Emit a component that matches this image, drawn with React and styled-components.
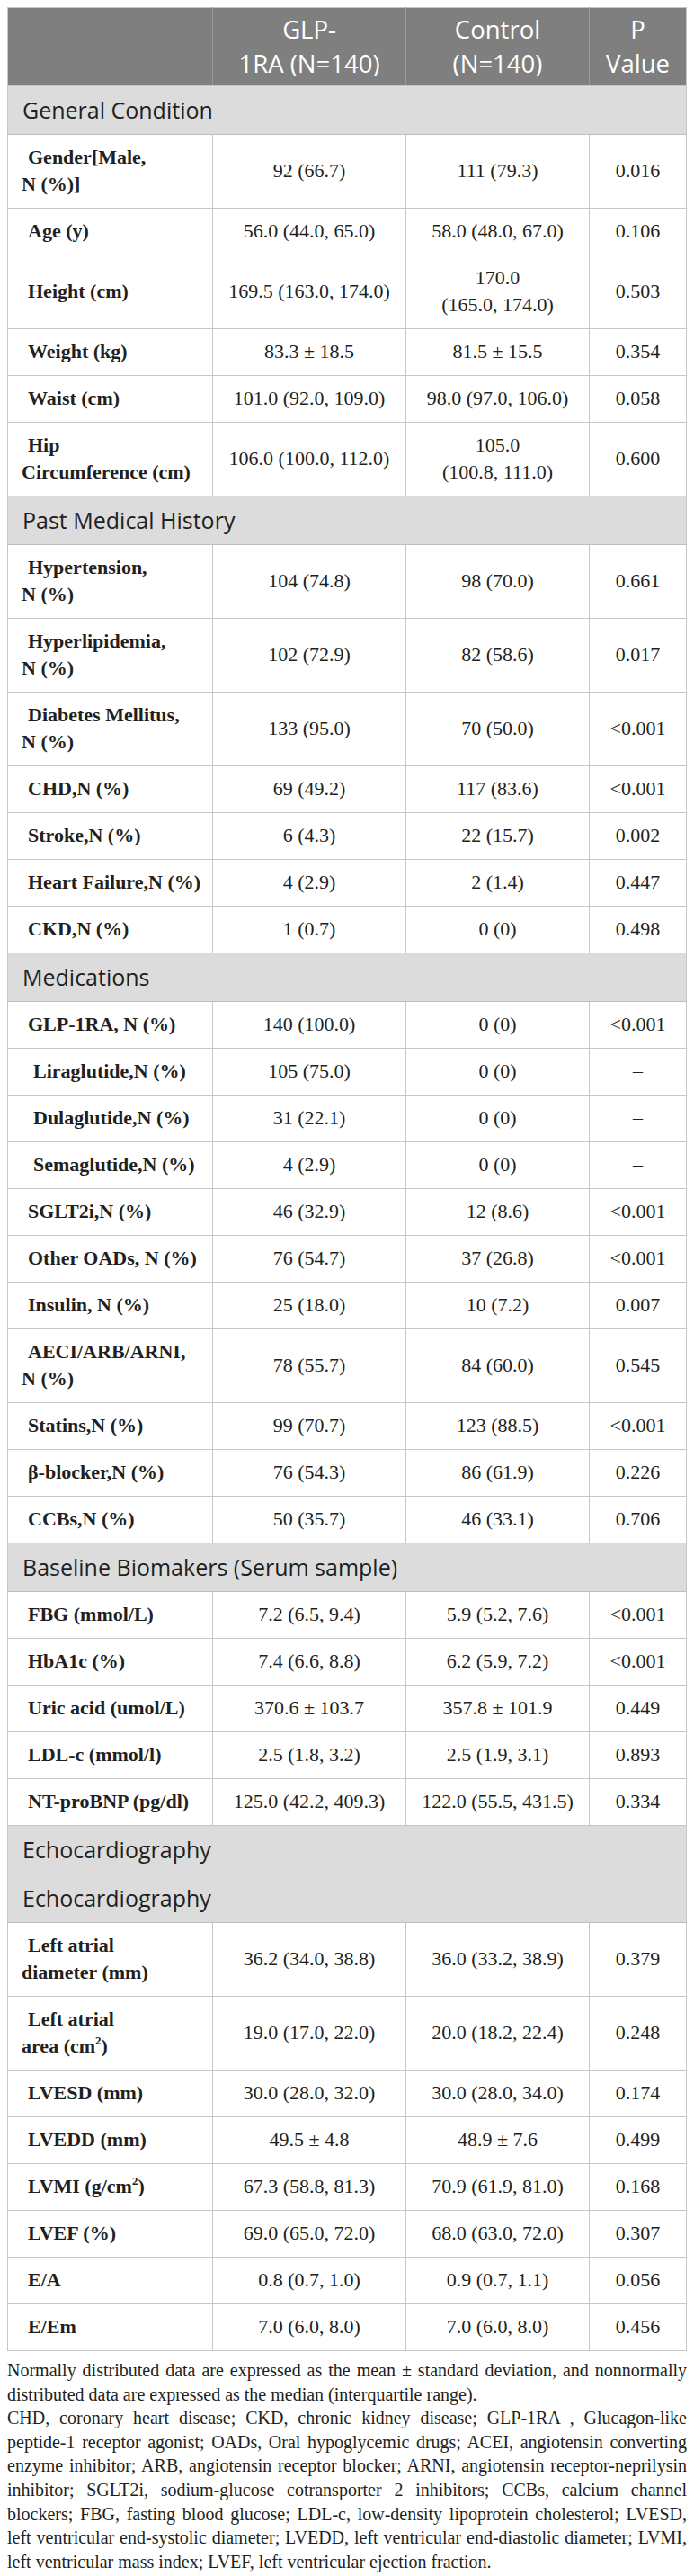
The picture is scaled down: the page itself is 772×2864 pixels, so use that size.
import React from "react";
import styled, { createGlobalStyle } from "styled-components";

const GlobalStyle = createGlobalStyle`
  body {
    margin: 8px;
    background: #fff;
    color: #231f20;
  }
`;

const sections = [
  {
    title: "General Condition",
    rows: [
      [["Gender[Male,", "N (%)]"], "92 (66.7)", "111 (79.3)", "0.016"],
      [["Age (y)"], "56.0 (44.0, 65.0)", "58.0 (48.0, 67.0)", "0.106"],
      [["Height (cm)"], "169.5 (163.0, 174.0)", ["170.0", "(165.0, 174.0)"], "0.503"],
      [["Weight (kg)"], "83.3 ± 18.5", "81.5 ± 15.5", "0.354"],
      [["Waist (cm)"], "101.0 (92.0, 109.0)", "98.0 (97.0, 106.0)", "0.058"],
      [["Hip", "Circumference (cm)"], "106.0 (100.0, 112.0)", ["105.0", "(100.8, 111.0)"], "0.600"],
    ],
  },
  {
    title: "Past Medical History",
    rows: [
      [["Hypertension,", "N (%)"], "104 (74.8)", "98 (70.0)", "0.661"],
      [["Hyperlipidemia,", "N (%)"], "102 (72.9)", "82 (58.6)", "0.017"],
      [["Diabetes Mellitus,", "N (%)"], "133 (95.0)", "70 (50.0)", "<0.001"],
      [["CHD,N (%)"], "69 (49.2)", "117 (83.6)", "<0.001"],
      [["Stroke,N (%)"], "6 (4.3)", "22 (15.7)", "0.002"],
      [["Heart Failure,N (%)"], "4 (2.9)", "2 (1.4)", "0.447"],
      [["CKD,N (%)"], "1 (0.7)", "0 (0)", "0.498"],
    ],
  },
  {
    title: "Medications",
    rows: [
      [["GLP-1RA, N (%)"], "140 (100.0)", "0 (0)", "<0.001"],
      [["Liraglutide,N (%)"], "105 (75.0)", "0 (0)", "–", true],
      [["Dulaglutide,N (%)"], "31 (22.1)", "0 (0)", "–", true],
      [["Semaglutide,N (%)"], "4 (2.9)", "0 (0)", "–", true],
      [["SGLT2i,N (%)"], "46 (32.9)", "12 (8.6)", "<0.001"],
      [["Other OADs, N (%)"], "76 (54.7)", "37 (26.8)", "<0.001"],
      [["Insulin, N (%)"], "25 (18.0)", "10 (7.2)", "0.007"],
      [["AECI/ARB/ARNI,", "N (%)"], "78 (55.7)", "84 (60.0)", "0.545"],
      [["Statins,N (%)"], "99 (70.7)", "123 (88.5)", "<0.001"],
      [["β-blocker,N (%)"], "76 (54.3)", "86 (61.9)", "0.226"],
      [["CCBs,N (%)"], "50 (35.7)", "46 (33.1)", "0.706"],
    ],
  },
  {
    title: "Baseline Biomakers (Serum sample)",
    rows: [
      [["FBG (mmol/L)"], "7.2 (6.5, 9.4)", "5.9 (5.2, 7.6)", "<0.001"],
      [["HbA1c (%)"], "7.4 (6.6, 8.8)", "6.2 (5.9, 7.2)", "<0.001"],
      [["Uric acid (umol/L)"], "370.6 ± 103.7", "357.8 ± 101.9", "0.449"],
      [["LDL-c (mmol/l)"], "2.5 (1.8, 3.2)", "2.5 (1.9, 3.1)", "0.893"],
      [["NT-proBNP (pg/dl)"], "125.0 (42.2, 409.3)", "122.0 (55.5, 431.5)", "0.334"],
    ],
  },
  { title: "Echocardiography", rows: [] },
  {
    title: "Echocardiography",
    rows: [
      [["Left atrial", "diameter (mm)"], "36.2 (34.0, 38.8)", "36.0 (33.2, 38.9)", "0.379"],
      [["Left atrial", <>area (cm<sup>2</sup>)</>], "19.0 (17.0, 22.0)", "20.0 (18.2, 22.4)", "0.248"],
      [["LVESD (mm)"], "30.0 (28.0, 32.0)", "30.0 (28.0, 34.0)", "0.174"],
      [["LVEDD (mm)"], "49.5 ± 4.8", "48.9 ± 7.6", "0.499"],
      [[<>LVMI (g/cm<sup>2</sup>)</>], "67.3 (58.8, 81.3)", "70.9 (61.9, 81.0)", "0.168"],
      [["LVEF (%)"], "69.0 (65.0, 72.0)", "68.0 (63.0, 72.0)", "0.307"],
      [["E/A"], "0.8 (0.7, 1.0)", "0.9 (0.7, 1.1)", "0.056"],
      [["E/Em"], "7.0 (6.0, 8.0)", "7.0 (6.0, 8.0)", "0.456"],
    ],
  },
];

const notes = [
  [
    "Normally distributed data are expressed as the mean ± standard deviation, and nonnormally",
    "distributed data are expressed as the median (interquartile range).",
  ],
  [
    "CHD, coronary heart disease; CKD, chronic kidney disease; GLP-1RA , Glucagon-like",
    "peptide-1 receptor agonist; OADs, Oral hypoglycemic drugs; ACEI, angiotensin converting",
    "enzyme inhibitor; ARB, angiotensin receptor blocker; ARNI, angiotensin receptor-neprilysin",
    "inhibitor; SGLT2i, sodium-glucose cotransporter 2 inhibitors; CCBs, calcium channel",
    "blockers; FBG, fasting blood glucose; LDL-c, low-density lipoprotein cholesterol; LVESD,",
    "left ventricular end-systolic diameter; LVEDD, left ventricular end-diastolic diameter; LVMI,",
    "left ventricular mass index; LVEF, left ventricular ejection fraction.",
  ],
];

function Lines({ parts }) {
  if (!Array.isArray(parts)) return parts;
  return parts.map((p, i) => (
    <React.Fragment key={i}>
      {i > 0 && <br />}
      {p}
    </React.Fragment>
  ));
}

export default function App() {
  return (
    <>
      <GlobalStyle />
      <Table>
        <colgroup>
          <Col $w={228} />
          <Col $w={215} />
          <Col $w={204} />
          <Col $w={108} />
        </colgroup>
        <thead>
          <tr>
            <HeadCell />
            <HeadCell>
              GLP-
              <br />
              1RA (N=140)
            </HeadCell>
            <HeadCell>
              Control
              <br />
              (N=140)
            </HeadCell>
            <HeadCell>
              P
              <br />
              Value
            </HeadCell>
          </tr>
        </thead>
        <tbody>
          {sections.map((s, si) => (
            <React.Fragment key={si}>
              <tr>
                <SectionCell colSpan={4}>{s.title}</SectionCell>
              </tr>
              {s.rows.map(([label, a, b, p, sub], ri) => (
                <tr key={ri}>
                  <LabelCell>
                    <Indent $sub={sub} />
                    <Lines parts={label} />
                  </LabelCell>
                  <ValueCell>
                    <Lines parts={a} />
                  </ValueCell>
                  <ValueCell>
                    <Lines parts={b} />
                  </ValueCell>
                  <ValueCell>{p}</ValueCell>
                </tr>
              ))}
            </React.Fragment>
          ))}
        </tbody>
      </Table>
      <Notes>
        {notes.map((para, pi) => (
          <Para key={pi}>
            {para.map((line, li) => (
              <NoteLine key={li} $last={li === para.length - 1}>
                {line}
              </NoteLine>
            ))}
          </Para>
        ))}
      </Notes>
    </>
  );
}

const Table = styled.table`
  width: 756px;
  border-collapse: collapse;
  table-layout: fixed;
  border: 1px solid #c6c6c6;
`;

const Col = styled.col`
  width: ${(p) => p.$w}px;
`;

const HeadCell = styled.th`
  background: #7f7f7f;
  color: #fff;
  font-family: "Open Sans", "Noto Sans", sans-serif;
  font-size: 27.5px;
  font-weight: 400;
  line-height: 38px;
  padding: 5px 4px;
  text-align: center;
  white-space: nowrap;
  border-left: 1px solid #9a9a9a;
  border-bottom: 1px solid #c6c6c6;
  &:first-child {
    border-left: none;
  }
`;

const SectionCell = styled.td`
  background: #dcdcdc;
  font-family: "Open Sans", "Noto Sans", sans-serif;
  font-size: 25px;
  line-height: 32px;
  padding: 10px 16px 11px;
  color: #1f1f1f;
  border-bottom: 1px solid #bdbdbd;
`;

const cellBase = `
  font-family: "Liberation Serif", "Times New Roman", serif;
  font-size: 22px;
  line-height: 30px;
  padding: 10px 15px 11px;
  border: 1px solid #c6c6c6;
  color: #231f20;
  white-space: nowrap;
  sup {
    font-size: 13px;
    line-height: 0;
    vertical-align: 9px;
  }
`;

const LabelCell = styled.td`
  ${cellBase}
  font-weight: 700;
  text-align: left;
  padding-right: 4px;
`;

const Indent = styled.span`
  display: inline-block;
  width: ${(p) => (p.$sub ? "13px" : "7px")};
`;

const ValueCell = styled.td`
  ${cellBase}
  text-align: center;
  padding-left: 2px;
  padding-right: 2px;
`;

const Notes = styled.div`
  width: 756px;
  margin-top: 8px;
  font-family: "Liberation Serif", "Times New Roman", serif;
  font-size: 20px;
  line-height: 26.6px;
  color: #231f20;
`;

const Para = styled.div``;

const NoteLine = styled.div`
  text-align: justify;
  text-align-last: ${(p) => (p.$last ? "left" : "justify")};
`;
